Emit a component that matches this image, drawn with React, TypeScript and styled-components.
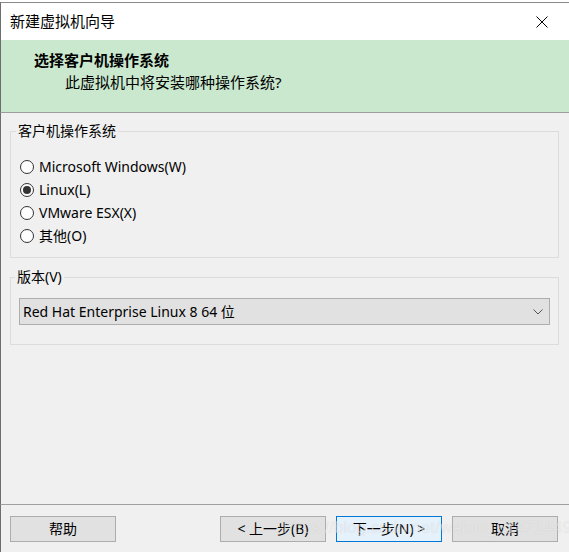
import styled, { createGlobalStyle } from 'styled-components';

const GlobalStyle = createGlobalStyle`
  html, body {
    margin: 0;
    padding: 0;
    background: #ffffff;
  }
  body {
    font-family: 'Noto Sans', 'Noto Sans CJK SC', sans-serif;
    color: #000;
  }
`;

const osOptions = [
  { label: 'Microsoft Windows(W)', checked: false },
  { label: 'Linux(L)', checked: true },
  { label: 'VMware ESX(X)', checked: false },
  { label: '其他(O)', checked: false },
];

const App = () => {
  return (
    <>
      <GlobalStyle />
      <Window>
        <TitleBar>
          <Title>新建虚拟机向导</Title>
          <CloseButton>
            <svg width="12" height="12" viewBox="0 0 12 12">
              <path d="M0.5 0.5 L11.5 11.5 M11.5 0.5 L0.5 11.5" stroke="#000" strokeWidth="1" fill="none" />
            </svg>
          </CloseButton>
        </TitleBar>
        <Header>
          <HeaderTitle>选择客户机操作系统</HeaderTitle>
          <HeaderSub>此虚拟机中将安装哪种操作系统?</HeaderSub>
        </Header>
        <Body>
          <Group $padding="14px 9px 10px">
            <Legend>客户机操作系统</Legend>
            {osOptions.map((opt) => (
              <RadioRow key={opt.label}>
                <RadioCircle $checked={opt.checked} />
                <RadioLabel>{opt.label}</RadioLabel>
              </RadioRow>
            ))}
          </Group>
          <Group $padding="11px 8px 19px">
            <Legend>版本(V)</Legend>
            <Select>
              <SelectText>Red Hat Enterprise Linux 8 64 位</SelectText>
              <svg width="10" height="6" viewBox="0 0 10 6">
                <path d="M0.5 0.5 L5 5 L9.5 0.5" stroke="#555" strokeWidth="1" fill="none" />
              </svg>
            </Select>
          </Group>
        </Body>
        <Footer>
          <Button>帮助</Button>
          <NavButtons>
            <Button>&lt; 上一步(B)</Button>
            <Button $primary>下一步(N) &gt;</Button>
            <Button>取消</Button>
          </NavButtons>
          <Watermark>https://blog.csdn.net/weixin_51471449</Watermark>
        </Footer>
      </Window>
    </>
  );
};

export default App;

const Window = styled.div`
  position: relative;
  width: 569px;
  height: 552px;
  box-sizing: border-box;
  padding-top: 2px;
  display: flex;
  flex-direction: column;
  overflow: hidden;
  background: #ffffff;
`;

const TitleBar = styled.div`
  height: 37px;
  flex-shrink: 0;
  display: flex;
  align-items: center;
  justify-content: space-between;
  padding-left: 10px;
  background: #ffffff;
  border-top: 1px solid #8a8a8a;
  border-left: 1px solid #6e6e6e;
`;

const Title = styled.span`
  font-size: 15px;
  line-height: 20px;
  margin-left: -1px;
  margin-top: -1px;
`;

const CloseButton = styled.div`
  width: 42px;
  height: 37px;
  display: flex;
  align-items: center;
  justify-content: center;
  margin-right: 6px;
`;

const Header = styled.div`
  height: 73px;
  flex-shrink: 0;
  box-sizing: border-box;
  padding: 10px 0 0 34px;
  background: #c9e8cd;
  border-bottom: 1px solid #9d9d9d;
  border-left: 1px solid #6e6e6e;
`;

const HeaderTitle = styled.div`
  font-size: 15px;
  line-height: 20px;
  font-weight: bold;
  margin-left: -1px;
`;

const HeaderSub = styled.div`
  font-size: 15px;
  line-height: 20px;
  margin-top: 2px;
  padding-left: 30px;
`;

const Body = styled.div`
  flex: 1;
  background: #f0f0f0;
  border-left: 1px solid #6e6e6e;
  padding: 8px 10px 0 9px;
  display: flex;
  flex-direction: column;
  gap: 9px;
`;

const Group = styled.fieldset<{ $padding: string }>`
  margin: 0;
  padding: ${(p) => p.$padding};
  border: 1px solid #dcdcdc;
  display: flex;
  flex-direction: column;
`;

const Legend = styled.legend`
  font-size: 14px;
  line-height: 20px;
  padding: 0 2px;
  margin-left: -4px;
`;

const RadioRow = styled.div`
  height: 23px;
  display: flex;
  align-items: center;
  gap: 5px;
`;

const RadioCircle = styled.span<{ $checked: boolean }>`
  flex-shrink: 0;
  width: 14px;
  height: 14px;
  box-sizing: border-box;
  border-radius: 50%;
  border: 1px solid #333333;
  background: #ffffff;
  display: flex;
  align-items: center;
  justify-content: center;

  &::after {
    content: '';
    width: 8px;
    height: 8px;
    border-radius: 50%;
    background: #333333;
    display: ${(p) => (p.$checked ? 'block' : 'none')};
  }
`;

const RadioLabel = styled.span`
  font-size: 14px;
  line-height: 20px;
`;

const Select = styled.div`
  height: 27px;
  box-sizing: border-box;
  background: #e1e1e1;
  border: 1px solid #adadad;
  display: flex;
  align-items: center;
  justify-content: space-between;
  padding: 0 6px 0 3px;
`;

const SelectText = styled.span`
  font-size: 14px;
  line-height: 20px;
`;

const Footer = styled.div`
  position: relative;
  height: 48px;
  flex-shrink: 0;
  box-sizing: border-box;
  background: #f0f0f0;
  border-top: 1px solid #a0a0a0;
  border-left: 1px solid #6e6e6e;
  padding: 11px 11px 0 9px;
  display: flex;
  justify-content: space-between;
  align-items: flex-start;
`;

const NavButtons = styled.div`
  display: flex;
  gap: 10px;
`;

const Button = styled.div<{ $primary?: boolean }>`
  width: 106px;
  height: 26px;
  box-sizing: border-box;
  border: 1px solid ${(p) => (p.$primary ? '#0078d7' : '#adadad')};
  background: ${(p) => (p.$primary ? '#e5f1fb' : '#e1e1e1')};
  display: flex;
  align-items: center;
  justify-content: center;
  font-size: 14px;
  line-height: 20px;
`;

const Watermark = styled.div`
  position: absolute;
  left: 282px;
  top: 13px;
  font-family: 'Liberation Sans', sans-serif;
  font-size: 17px;
  white-space: nowrap;
  color: rgba(255, 255, 255, 0.5);
  text-shadow: 0 0 1px rgba(0, 0, 0, 0.12);
  pointer-events: none;
`;
